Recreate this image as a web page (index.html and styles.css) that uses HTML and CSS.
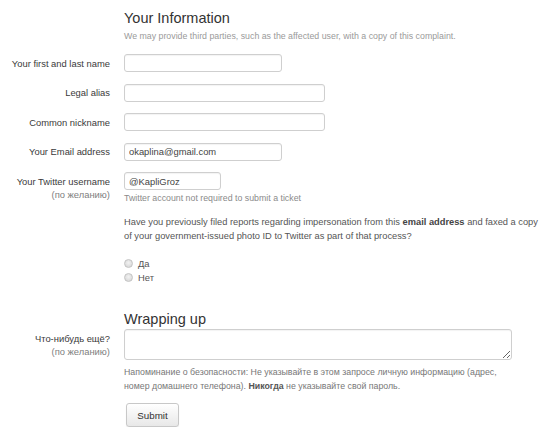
FILE: index.html
```html
<!DOCTYPE html>
<html>
    <head>
        <meta charset="UTF-8">
        <title>Report impersonation</title>
        <link rel="stylesheet" href="styles.css">
    </head>
    <body>
        <form class="report" onsubmit="return false">
            <div class="row">
                <div class="row-label"></div>
                <div class="row-field">
                    <h2 class="section-title">Your Information</h2>
                    <p class="lead">We may provide third parties, such as the affected user, with a copy of this complaint.</p>
                </div>
            </div>

            <div class="row row-first">
                <label class="row-label" for="full-name">Your first and last name</label>
                <div class="row-field"><input class="text short" id="full-name" type="text"></div>
            </div>
            <div class="row">
                <label class="row-label" for="alias">Legal alias</label>
                <div class="row-field"><input class="text long" id="alias" type="text"></div>
            </div>
            <div class="row">
                <label class="row-label" for="nickname">Common nickname</label>
                <div class="row-field"><input class="text long" id="nickname" type="text"></div>
            </div>
            <div class="row">
                <label class="row-label" for="email">Your Email address</label>
                <div class="row-field"><input class="text short" id="email" type="text" value="okaplina@gmail.com"></div>
            </div>
            <div class="row">
                <label class="row-label" for="twitter">Your Twitter username<br><span class="optional">(по желанию)</span></label>
                <div class="row-field">
                    <input class="text tiny" id="twitter" type="text" value="@KapliGroz">
                    <p class="hint">Twitter account not required to submit a ticket</p>
                </div>
            </div>

            <div class="row row-question">
                <div class="row-label"></div>
                <div class="row-field">
                    <p class="question">Have you previously filed reports regarding impersonation from this <b>email address</b> and faxed a copy of your government-issued photo ID to Twitter as part of that process?</p>
                    <div class="choices">
                        <label class="choice"><input type="radio" name="filed"> Да</label>
                        <label class="choice"><input type="radio" name="filed"> Нет</label>
                    </div>
                </div>
            </div>

            <div class="row row-section">
                <div class="row-label"></div>
                <div class="row-field">
                    <h2 class="section-title">Wrapping up</h2>
                </div>
            </div>
            <div class="row row-tight">
                <label class="row-label" for="other">Что-нибудь ещё?<br><span class="optional">(по желанию)</span></label>
                <div class="row-field">
                    <textarea class="text area" id="other"></textarea>
                    <p class="note">Напоминание о безопасности: Не указывайте в этом запросе личную информацию (адрес, номер домашнего телефона). <b>Никогда</b> не указывайте свой пароль.</p>
                    <button class="submit" type="submit">Submit</button>
                </div>
            </div>
        </form>
    </body>
</html>
```

FILE: styles.css
```css
body{
    margin: 0;
    background: #fff;
    color: #333;
    font-family: "Liberation Sans", Arial, sans-serif;
}

.report{
    padding-top: 9px;
}

.row{
    display: flex;
    gap: 14px;
    margin-top: 11.5px;
}

.row:first-child{
    margin-top: 0;
}

.row-first{
    margin-top: 12px;
}

.row-label{
    flex: none;
    width: 110px;
    padding-top: 2.5px;
    text-align: right;
    font-size: 9.4px;
    line-height: 13px;
    color: #3a3a3a;
}

.optional{
    color: #808080;
}

.row-field{
    flex: 1;
    min-width: 0;
}

.section-title{
    margin: 0;
    font-size: 14.5px;
    line-height: 18px;
    font-weight: normal;
    color: #333;
}

.lead{
    margin: 3px 0 0;
    font-size: 8.8px;
    line-height: 12px;
    color: #9a9a9a;
}

.text{
    display: block;
    box-sizing: border-box;
    height: 18px;
    margin: 0;
    padding: 0 4px;
    border: 1px solid #cfcfcf;
    border-radius: 3px;
    box-shadow: inset 0 1px 1px rgba(0,0,0,0.05);
    background: #fff;
    font-family: inherit;
    font-size: 9.4px;
    color: #444;
}

.short{ width: 158px; }
.long{ width: 201px; }
.tiny{ width: 97px; }

.area{
    width: 388px;
    height: 31px;
    resize: both;
}

.hint{
    margin: 2px 0 0;
    font-size: 8.8px;
    line-height: 12px;
    color: #8a8a8a;
}

.row-question{
    margin-top: 11px;
}

.question{
    margin: 0;
    max-width: 420px;
    font-size: 9.3px;
    line-height: 14px;
    color: #555;
}

.question b{
    color: #444;
}

.choices{
    margin-top: 13px;
}

.choice{
    display: flex;
    align-items: center;
    gap: 5px;
    height: 14px;
    font-size: 9.4px;
    color: #555;
}

.choice input{
    appearance: none;
    width: 9px;
    height: 9px;
    margin: 0;
    border: 1px solid #c4c4c4;
    border-radius: 50%;
    background: radial-gradient(circle at 50% 40%, #f2f2f2, #d2d2d2);
}

.row-section{
    margin-top: 26px;
}

.row-tight{
    margin-top: 1px;
}

.note{
    margin: 5px 0 0;
    width: 388px;
    font-size: 8.8px;
    line-height: 14px;
    color: #777;
}

.note b{
    color: #555;
}

.submit{
    display: block;
    width: 53px;
    height: 24px;
    margin: 10px 0 0 2px;
    padding: 0;
    border: 1px solid #c8c8c8;
    border-radius: 3px;
    background: linear-gradient(#ffffff, #e8e8e8);
    box-shadow: 0 1px 1px rgba(0,0,0,0.08);
    font-family: inherit;
    font-size: 9.8px;
    color: #333;
}
```
